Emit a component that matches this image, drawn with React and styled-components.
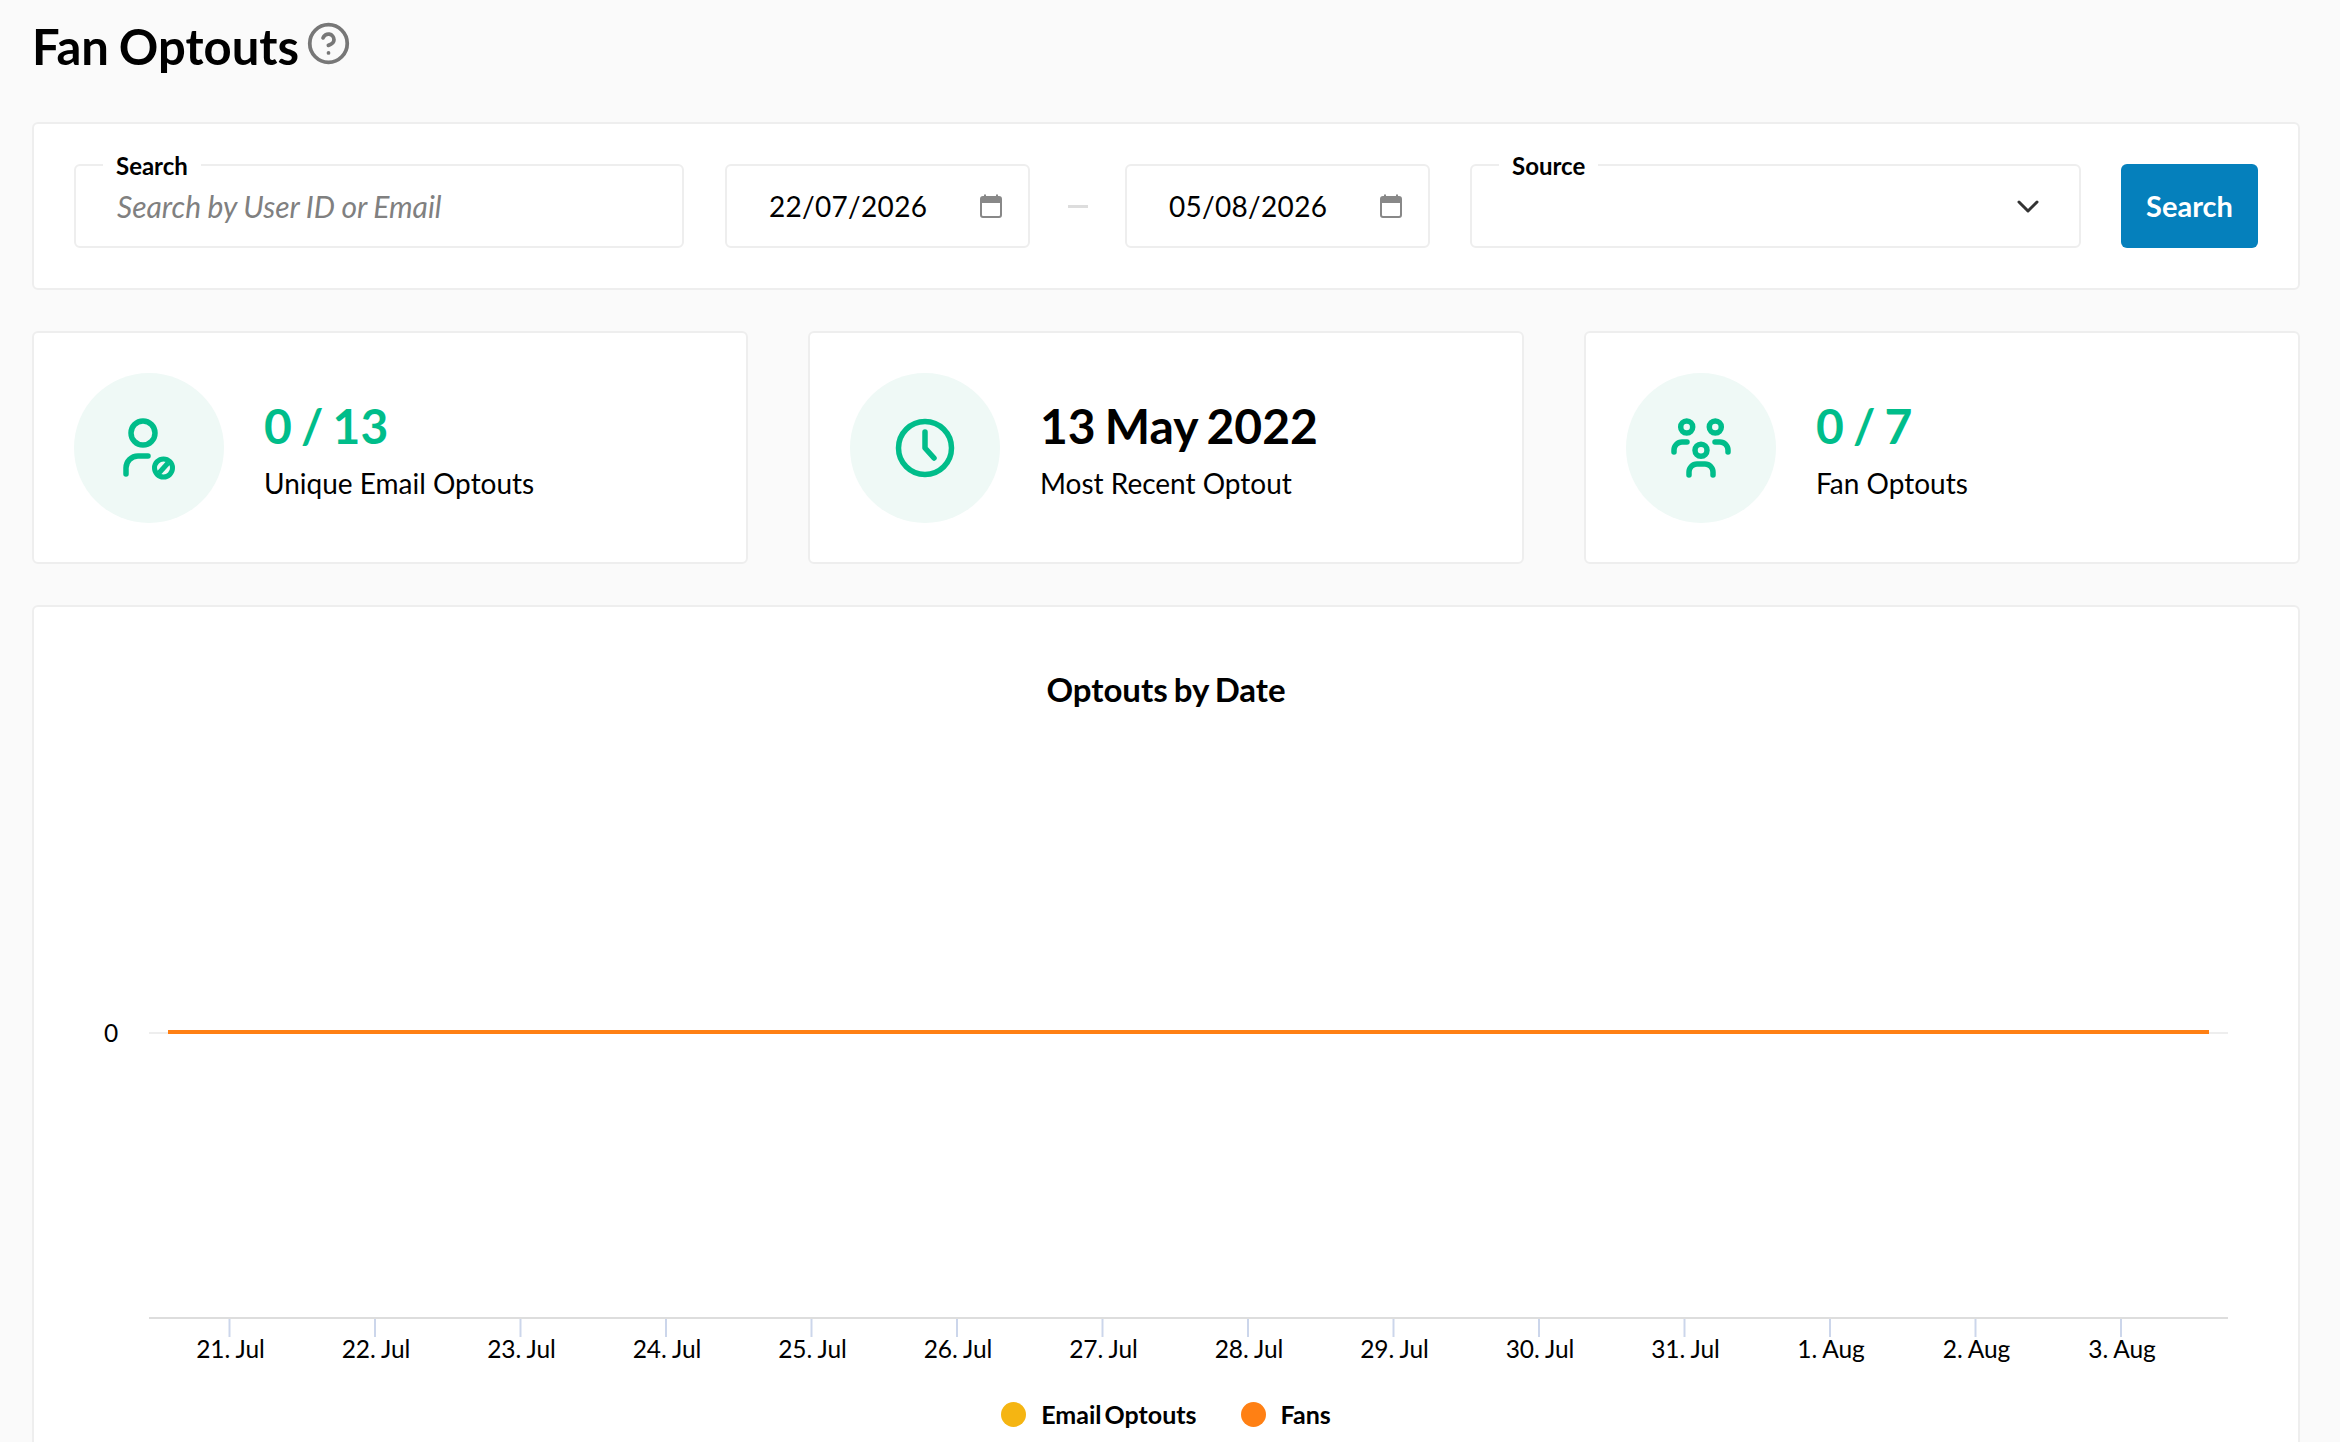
import styled, { createGlobalStyle } from 'styled-components';
import { CircleHelp } from 'lucide-react';

const green = '#00bd8a';
const ticks = ['21. Jul', '22. Jul', '23. Jul', '24. Jul', '25. Jul', '26. Jul', '27. Jul', '28. Jul', '29. Jul', '30. Jul', '31. Jul', '1. Aug', '2. Aug', '3. Aug'];

const GlobalStyle = createGlobalStyle`
    html, body {
        margin: 0;
        padding: 0;
        overflow: hidden;
        background: #fafafa;
    }
    body {
        font-family: Lato, "Noto Sans", sans-serif;
        color: #000;
    }
    * {
        box-sizing: border-box;
    }
`;

const Page = styled.div`
    width: 2340px;
    height: 1442px;
    overflow: hidden;
    padding: 0 40px 0 32px;
    display: flex;
    flex-direction: column;
    gap: 41px;

    & > * {
        flex: none;
    }
`;

const Header = styled.div`
    height: 81px;
    display: flex;
    align-items: flex-start;
    gap: 10px;
    padding-top: 17px;
`;

const Title = styled.h1`
    margin: 0;
    font-size: 49px;
    line-height: 58px;
    font-weight: 700;
    word-spacing: -2px;
`;

const HelpIcon = styled(CircleHelp)`
    width: 45px;
    height: 45px;
    margin-top: 4px;
    margin-left: -3px;
    color: #777;
`;

const Card = styled.div`
    background: #fff;
    border: 2px solid #eee;
    border-radius: 6px;
`;

const FilterCard = styled(Card)`
    height: 168px;
    padding: 40px;
    display: flex;
    align-items: stretch;
`;

const Field = styled.div`
    position: relative;
    width: ${props => props.width}px;
    height: 84px;
    margin-right: ${props => props.gap || 0}px;
    flex: none;
    display: flex;
    align-items: center;
    justify-content: space-between;
    padding: ${props => props.padding};
    border: 2px solid #eee;
    border-radius: 6px;
    background: #fff;
`;

const Legend = styled.span`
    position: absolute;
    top: -12px;
    left: 27px;
    padding: 0 13px;
    background: #fff;
    font-size: 24px;
    line-height: 24px;
    font-weight: 700;
`;

const Placeholder = styled.span`
    font-size: 30px;
    font-style: italic;
    color: #808080;
    word-spacing: -0.5px;
`;

const DateText = styled.span`
    font-size: 28px;
    letter-spacing: 0.3px;
`;

const Dash = styled.div`
    width: 95px;
    flex: none;
    height: 84px;
    display: flex;
    align-items: center;
    justify-content: center;

    &::before {
        content: '';
        width: 20px;
        height: 3px;
        background: #ddd;
    }
`;

const SearchButton = styled.button`
    width: 137px;
    height: 84px;
    flex: none;
    border: none;
    border-radius: 6px;
    background: #0580bc;
    color: #fff;
    font-family: inherit;
    font-size: 29px;
    font-weight: 700;
    padding: 0 0 2px;
`;

const StatRow = styled.div`
    display: grid;
    grid-template-columns: repeat(3, 716px);
    column-gap: 60px;
`;

const StatCard = styled(Card)`
    height: 233px;
    padding: 0 40px;
    display: flex;
    align-items: center;
    gap: 40px;
`;

const IconCircle = styled.div`
    width: 150px;
    height: 150px;
    flex: none;
    border-radius: 50%;
    background: #eff9f6;
    display: flex;
    align-items: center;
    justify-content: center;
`;

const StatText = styled.div`
    display: flex;
    flex-direction: column;
    gap: 10px;
    margin-top: 2px;
`;

const StatValue = styled.div`
    font-size: 48px;
    line-height: 58px;
    font-weight: 700;
    word-spacing: -2.5px;
    color: ${props => props.color};
`;

const StatLabel = styled.div`
    font-size: 28px;
    line-height: 36px;
`;

const ChartCard = styled(Card)`
    height: 900px;
    display: flex;
    flex-direction: column;
    align-items: center;
    padding-top: 62px;
`;

const ChartTitle = styled.div`
    font-size: 33px;
    line-height: 40px;
    font-weight: 700;
    word-spacing: -2px;
`;

const Plot = styled.svg`
    display: block;
    flex: none;
    margin-top: 271px;
    width: 2264px;
    height: 390px;
`;

const PlotText = styled.text`
    font-family: Lato, sans-serif;
    font-size: 24.5px;
    word-spacing: -0.5px;
    fill: #000;
`;

const LegendRow = styled.div`
    display: flex;
    align-items: center;
    margin-top: 28px;
    gap: 44px;
`;

const LegendItem = styled.div`
    display: flex;
    align-items: center;
    gap: 15px;
    font-size: 25px;
    line-height: 32px;
    font-weight: 700;
    word-spacing: -3px;
`;

const Dot = styled.span`
    width: 25px;
    height: 25px;
    border-radius: 50%;
    background: ${props => props.color};
`;

const CalendarIcon = () => (
    <svg width="22" height="24" viewBox="0 0 22 24" fill="none">
        <rect x="1" y="3" width="20" height="20" rx="2" stroke="#888" strokeWidth="2" />
        <path d="M1 5a2 2 0 0 1 2-2h16a2 2 0 0 1 2 2v4H1z" fill="#888" />
        <path d="M5 0.5v3M17 0.5v3" stroke="#888" strokeWidth="2" />
    </svg>
);

const Chevron = () => (
    <svg width="22" height="13" viewBox="0 0 22 13" fill="none">
        <path d="M2 2l9 9 9-9" stroke="#333" strokeWidth="3" strokeLinecap="round" strokeLinejoin="round" />
    </svg>
);

const PersonBlockedIcon = () => (
    <svg width="64" height="64" viewBox="0 0 64 64" fill="none" stroke={green} strokeWidth="5.5" strokeLinecap="round">
        <circle cx="26" cy="17" r="12" />
        <path d="M9 58v-6a12 12 0 0 1 12-12h10" />
        <circle cx="46.5" cy="52" r="9" fill="#eff9f6" strokeWidth="5" />
        <path d="M42 57l9-10" strokeWidth="5" strokeLinecap="butt" />
    </svg>
);

const ClockIcon = () => (
    <svg width="64" height="64" viewBox="0 0 64 64" fill="none" stroke={green} strokeWidth="5.5" strokeLinecap="round" strokeLinejoin="round">
        <circle cx="32" cy="32" r="26.5" />
        <path d="M32 16v16l9 10" />
    </svg>
);

const GroupIcon = () => (
    <svg width="64" height="64" viewBox="0 0 64 64" fill="none" stroke={green} strokeWidth="5.5" strokeLinecap="round">
        <circle cx="17.7" cy="11" r="6" />
        <circle cx="46.3" cy="11" r="6" />
        <circle cx="32" cy="34.3" r="6" />
        <path d="M5 36v-2a8 8 0 0 1 8-8h5" />
        <path d="M59 36v-2a8 8 0 0 0-8-8h-5" />
        <path d="M20 59v-3a8 8 0 0 1 8-8h8a8 8 0 0 1 8 8v3" />
    </svg>
);

const Chart = () => (
    <Plot viewBox="0 0 2264 390">
        <line x1="115" y1="53" x2="2194" y2="53" stroke="#eeeeee" strokeWidth="2" />
        <line x1="134" y1="52" x2="2175" y2="52" stroke="#f5b512" strokeWidth="4" />
        <line x1="134" y1="52" x2="2175" y2="52" stroke="#ff8014" strokeWidth="4" />
        <line x1="115" y1="338" x2="2194" y2="338" stroke="#dddddd" strokeWidth="2" />
        <PlotText x="77" y="62" textAnchor="middle">0</PlotText>
        {ticks.map((tick, i) => {
            const x = 195.5 + i * 145.5;
            return (
                <g key={tick}>
                    <line x1={x} y1="339" x2={x} y2="357" stroke="#ccd6eb" strokeWidth="2" />
                    <PlotText x={x + 1} y="378" textAnchor="middle">{tick}</PlotText>
                </g>
            );
        })}
    </Plot>
);

const stats = [
    { icon: <PersonBlockedIcon />, value: '0 / 13', label: 'Unique Email Optouts', color: green },
    { icon: <ClockIcon />, value: '13 May 2022', label: 'Most Recent Optout', color: '#000' },
    { icon: <GroupIcon />, value: '0 / 7', label: 'Fan Optouts', color: green },
];

const App = () => (
    <>
        <GlobalStyle />
        <Page>
            <Header>
                <Title>Fan Optouts</Title>
                <HelpIcon strokeWidth={2} />
            </Header>
            <FilterCard>
                <Field width={610} gap={41} padding="0 41px">
                    <Legend>Search</Legend>
                    <Placeholder>Search by User ID or Email</Placeholder>
                </Field>
                <Field width={305} padding="0 26px 0 42px">
                    <DateText>22/07/2026</DateText>
                    <CalendarIcon />
                </Field>
                <Dash />
                <Field width={305} gap={40} padding="0 26px 0 42px">
                    <DateText>05/08/2026</DateText>
                    <CalendarIcon />
                </Field>
                <Field width={611} gap={40} padding="0 40px 0 0">
                    <Legend>Source</Legend>
                    <span />
                    <Chevron />
                </Field>
                <SearchButton>Search</SearchButton>
            </FilterCard>
            <StatRow>
                {stats.map(stat => (
                    <StatCard key={stat.label}>
                        <IconCircle>{stat.icon}</IconCircle>
                        <StatText>
                            <StatValue color={stat.color}>{stat.value}</StatValue>
                            <StatLabel>{stat.label}</StatLabel>
                        </StatText>
                    </StatCard>
                ))}
            </StatRow>
            <ChartCard>
                <ChartTitle>Optouts by Date</ChartTitle>
                <Chart />
                <LegendRow>
                    <LegendItem><Dot color="#f5b512" />Email Optouts</LegendItem>
                    <LegendItem><Dot color="#ff8014" />Fans</LegendItem>
                </LegendRow>
            </ChartCard>
        </Page>
    </>
);

export default App;
